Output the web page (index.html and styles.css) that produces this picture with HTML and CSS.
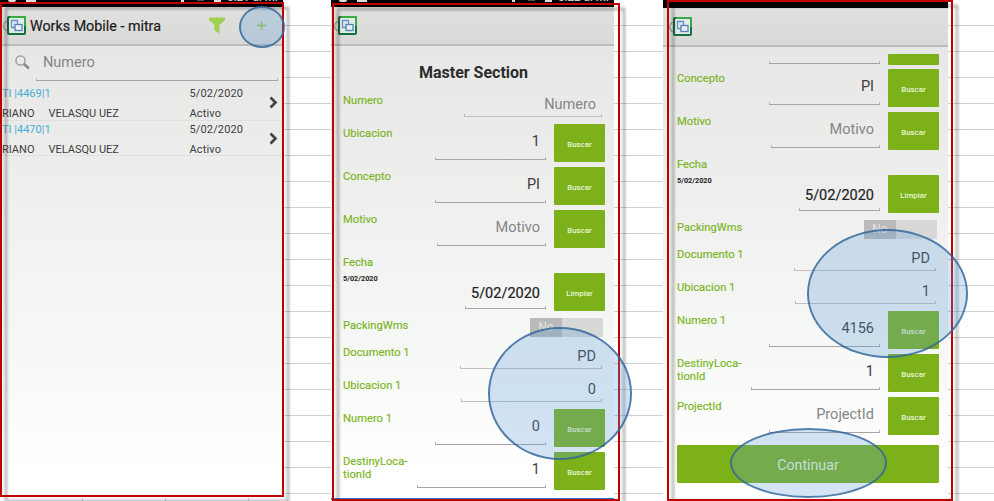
FILE: index.html
```html
<!DOCTYPE html>
<html lang="es">
<head>
<meta charset="utf-8">
<title>Works Mobile - mitra</title>
<link rel="stylesheet" href="styles.css">
</head>
<body>
<svg class="defs" width="0" height="0">
  <defs>
    <symbol id="logo" viewBox="0 0 19 19">
      <rect x="1" y="1" width="17" height="17" rx="1" fill="#e3eaec" stroke="#13713a" stroke-width="2"/>
      <path d="M3 1H18V10" fill="none" stroke="#35ad40" stroke-width="2"/>
      <path d="M8 11.500H4.500V4.500H10.500V8.500" fill="#dbe7f3" stroke="#6a93c2" stroke-width="1.300"/>
      <rect x="8" y="8.500" width="7" height="6" fill="#e9eff5" stroke="#5681b3" stroke-width="1.300"/>
    </symbol>
    <symbol id="back" viewBox="0 0 5 12"><path d="M4.500 1Q-1.500 6 4.500 11" fill="none" stroke="#999" stroke-width="1.300"/></symbol>
    <symbol id="next" viewBox="0 0 9 13"><path d="M1.500 1.500L6.500 6.500L1.500 11.500" fill="none" stroke="#444" stroke-width="2.700"/></symbol>
  </defs>
</svg>
<main class="sheet">
  <section class="phone list-phone">
    <div class="screen">
      <div class="status"><i class="dot"></i><i class="block"></i><span class="signal"></span><i class="dash"></i><i class="batt"></i><span class="clock">5:21 a. m.</span></div>
      <header class="bar">
        <svg class="back"><use href="#back"/></svg><svg class="logo"><use href="#logo"/></svg>
        <h1>Works Mobile - mitra</h1>
        <svg class="filter" viewBox="0 0 16 17"><path d="M0 .5H16V3L10.500 8V16.500L5.500 13.500V8L0 3Z" fill="#9fd050"/></svg>
        <svg class="plus" viewBox="0 0 9 9"><path d="M4.500 0V9M0 4.500H9" stroke="#8dc63f" stroke-width="1.300"/></svg>
      </header>
      <div class="search">
        <svg viewBox="0 0 15 15"><circle cx="5.500" cy="5.500" r="4.600" fill="none" stroke="#969696" stroke-width="1.300"/><path d="M9 9L14 13.500" stroke="#888" stroke-width="2.500"/></svg>
        <div class="field hint">Numero</div>
      </div>
      <div class="item"><div class="left"><b>TI |4469|1</b><span>RIANO<em>VELASQU UEZ</em></span></div><div class="right"><span>5/02/2020</span><span>Activo</span></div><svg><use href="#next"/></svg></div>
      <div class="item"><div class="left"><b>TI |4470|1</b><span>RIANO<em>VELASQU UEZ</em></span></div><div class="right"><span>5/02/2020</span><span>Activo</span></div><svg><use href="#next"/></svg></div>
    </div>
    <div class="frame"></div>
    <div class="ring ring-add"></div>
    <div class="ticks"></div>
  </section>

  <section class="phone form-phone">
    <div class="screen">
      <div class="status"><i class="dot"></i><i class="block"></i><span class="signal"></span><i class="dash"></i><i class="batt"></i><span class="clock">5:22 a. m.</span></div>
      <header class="bar"><svg class="back"><use href="#back"/></svg><svg class="logo"><use href="#logo"/></svg></header>
      <div class="form">
        <h2>Master Section</h2>
        <div class="row short"><label>Numero</label><div class="field hint w-num">Numero</div></div>
        <div class="row"><label>Ubicacion</label><div class="field">1</div><button>Buscar</button></div>
        <div class="row"><label>Concepto</label><div class="field">PI</div><button>Buscar</button></div>
        <div class="row"><label>Motivo</label><div class="field hint w-mot">Motivo</div><button>Buscar</button></div>
        <div class="row date"><label>Fecha<small>5/02/2020</small></label><div class="field w-date">5/02/2020</div><button>Limpiar</button></div>
        <div class="row toggle"><label>PackingWms</label><div class="switch"><span>No</span></div></div>
        <div class="row short"><label>Documento 1</label><div class="field w-doc">PD</div></div>
        <div class="row short"><label>Ubicacion 1</label><div class="field w-ubi">0</div></div>
        <div class="row"><label>Numero 1</label><div class="field">0</div><button>Buscar</button></div>
        <div class="row"><label>DestinyLoca-<br>tionId</label><div class="field w-dest">1</div><button>Buscar</button></div>
      </div>
      <div class="foot"></div>
    </div>
    <div class="frame"></div>
    <div class="ring ring-zero"></div>
  </section>

  <section class="phone done-phone">
    <div class="screen">
      <div class="status"><i class="dot"></i><i class="block"></i><span class="signal"></span><i class="dash"></i><i class="batt"></i><span class="clock">5:23 a. m.</span></div>
      <header class="bar"><svg class="back"><use href="#back"/></svg><svg class="logo"><use href="#logo"/></svg></header>
      <div class="form">
        <div class="row cut"><div class="field"></div><button></button></div>
        <div class="row"><label>Concepto</label><div class="field">PI</div><button>Buscar</button></div>
        <div class="row"><label>Motivo</label><div class="field hint w-mot">Motivo</div><button>Buscar</button></div>
        <div class="row date"><label>Fecha<small>5/02/2020</small></label><div class="field w-date">5/02/2020</div><button>Limpiar</button></div>
        <div class="row toggle"><label>PackingWms</label><div class="switch"><span>No</span></div></div>
        <div class="row short"><label>Documento 1</label><div class="field w-doc">PD</div></div>
        <div class="row short"><label>Ubicacion 1</label><div class="field w-ubi">1</div></div>
        <div class="row"><label>Numero 1</label><div class="field">4156</div><button>Buscar</button></div>
        <div class="row"><label>DestinyLoca-<br>tionId</label><div class="field w-dest">1</div><button>Buscar</button></div>
        <div class="row"><label>ProjectId</label><div class="field hint">ProjectId</div><button>Buscar</button></div>
        <button class="continue">Continuar</button>
      </div>
    </div>
    <div class="frame"></div>
    <div class="ring ring-values"></div>
    <div class="ring ring-continue"></div>
  </section>
</main>
</body>
</html>
```
FILE: styles.css
```css
* { box-sizing: border-box; }
body { margin: 0; font-family: Roboto, "Liberation Sans", sans-serif; background: #fff; overflow: hidden; }
.defs { position: absolute; }
.sheet {
  display: flex; width: 994px; height: 501px; overflow: hidden;
  background: repeating-linear-gradient(to bottom, transparent 0 25px, #d0d0d0 25px 26px);
}
.phone { position: relative; flex: none; height: 501px; }
.list-phone { width: 283px; }
.form-phone { width: 283px; margin-left: 48px; }
.done-phone { width: 285px; margin-left: 49px; }
.screen { height: 501px; overflow: hidden; background: linear-gradient(#e6e7e6 45px, #ebebea 130px, #f1f2f1 250px, #f8faf8 380px, #fff 470px); }
.list-phone .screen { height: 497px; }

.status { display: flex; align-items: flex-start; height: 7px; background: #000; color: #ccc; overflow: hidden; }
.done-phone .status { height: 8px; }
.status i, .signal { flex: none; background: #ddd; }
.dot { width: 8px; height: 2px; margin-left: 8px; border-radius: 0 0 5px 5px; }
.block { width: 10px; height: 2px; margin-left: 10px; }
.signal { width: 3px; height: 2px; margin-left: 145px; }
.status .dash { width: 7px; height: 1px; margin-left: 13px; background: #555; }
.batt { width: 7px; height: 2px; margin-left: 10px; }
.clock { font-size: 11.500px; font-weight: 500; line-height: 11px; margin: -8px 0 0 6px; white-space: nowrap; color: #ccc; }

.bar { display: flex; align-items: center; height: 39px; background: linear-gradient(#e0e1df, #d9dad8); border-bottom: 2px solid #bbbcbb; }
.done-phone .bar { padding-left: 3px; }
.back { width: 5px; height: 12px; margin-left: 2px; }
.logo { width: 19px; height: 19px; }
.bar h1 { margin: 0 0 0 4px; width: 132px; font-size: 14.300px; font-weight: 400; color: #1c1c1c; -webkit-text-stroke: .2px #1c1c1c; white-space: nowrap; }
.filter { width: 16px; height: 17px; margin-left: 47px; }
.plus { width: 9px; height: 9px; margin-left: 32px; }

.search { display: flex; height: 39px; padding: 9px 0 0 15px; }
.search svg { width: 15px; height: 15px; }
.search .field { width: 242px; height: 26px; margin: 0 0 0 6px; padding: 0 7px; text-align: left; line-height: 16px; }
.item { display: flex; height: 35.500px; font-size: 11px; color: #3d3d3d; border-bottom: 1px solid #dfe0df; }
.item .left { width: 189.500px; padding-left: 2px; }
.item .right { width: 79px; letter-spacing: .15px; }
.item .left > *, .item .right > * { display: block; height: 20px; line-height: 18px; white-space: nowrap; font-weight: 400; }
.item b { color: #45afd6; }
.item em { font-style: normal; margin-left: 14px; }
.item svg { width: 9px; height: 13px; margin-top: 11px; }

.form { padding: 0 9px 0 12px; }
.done-phone .form { padding: 0 9px 0 14px; }
.form h2 { height: 45px; margin: 0; padding: 17px 1px 0 0; text-align: center; font-size: 16px; line-height: 20px; font-weight: 700; color: #2c2c2c; }
.row { display: flex; align-items: flex-start; height: 43px; }
.row.short { height: 33px; padding-right: 3px; }
.row.date { height: 63px; }
.row.toggle { height: 27px; padding-right: 2px; }
.row label { width: 70px; font-size: 11.200px; line-height: 13px; padding-top: 3px; color: #7ab51d; white-space: nowrap; -webkit-text-stroke: .15px #7ab51d; }
.row small { display: block; margin-top: 5px; font-size: 7.300px; line-height: 10px; color: #222; font-weight: 700; -webkit-text-stroke: 0; }
.field {
  position: relative; width: 111px; height: 36px; margin-left: auto; padding: 9px 6px 0 0;
  text-align: right; font-size: 14.500px; line-height: 17px; color: #3c3c3c; white-space: nowrap;
  border-bottom: 1px solid #a5a6a5;
}
.field::after { content: ""; position: absolute; left: 0; right: 0; bottom: 0; height: 2px; border: solid #b5b6b5; border-width: 0 1px; }
.field.hint { color: #858585; }
.short .field { height: 26px; padding-top: 5px; border-color: #bfc0bf; }
.date .field { height: 56px; padding-top: 32px; color: #222; -webkit-text-stroke: .2px #222; }
.field.w-num { width: 138px; }
.field.w-mot { width: 109px; }
.field.w-date { width: 81px; }
.field.w-doc { width: 142px; }
.field.w-ubi { width: 141px; }
.field.w-dest { width: 129px; }
.form button { flex: none; width: 51px; height: 38px; margin: 0 0 0 8px; padding: 2px 0 0; border: 0; border-radius: 1px; background: #7db11a; color: #eaf4d8; font: 500 7.800px Roboto, sans-serif; }
.form .date button { margin-top: 20px; }
.switch { width: 73px; height: 19px; margin: 2px 0 0 auto; background: #d7d8d7; }
.switch span { display: block; width: 32px; height: 19px; background: #b9bab9; color: #e5e5e5; font-size: 12px; line-height: 19px; text-align: center; }
.form .cut { height: 22px; padding-top: 7px; }
.cut .field { height: 8px; }
.form .cut button { height: 11px; }
.form .continue { display: block; width: 262px; margin: 5px 0 0; font-size: 14.200px; font-weight: 400; }
.foot { height: 2px; margin-top: 3px; background: #2f80d0; }

.frame { position: absolute; border: 2px solid #c00000; filter: drop-shadow(5px 5px 1.500px rgba(0, 0, 0, .38)); }
.list-phone .frame { left: 0; top: 2px; width: 284px; height: 495px; }
.form-phone .frame { left: 1px; top: 3px; width: 288px; height: 498px; }
.done-phone .frame { left: 4px; top: 0; width: 286px; height: 501px; }
.ring { position: absolute; border: 2px solid rgba(50, 103, 155, .85); border-radius: 50%; background: rgba(91, 155, 213, .27) padding-box; }
.ring-add { left: 239px; top: 6px; width: 46px; height: 42px; }
.ring-zero { left: 157px; top: 327px; width: 144px; height: 133px; }
.ring-values { left: 144px; top: 229px; width: 161px; height: 129px; }
.ring-continue { left: 67px; top: 428px; width: 157px; height: 70px; }
.ticks { position: absolute; left: 82px; top: 498px; width: 167px; height: 3px; background: repeating-linear-gradient(to right, #bbb 0 1px, transparent 1px 83px); }
```
